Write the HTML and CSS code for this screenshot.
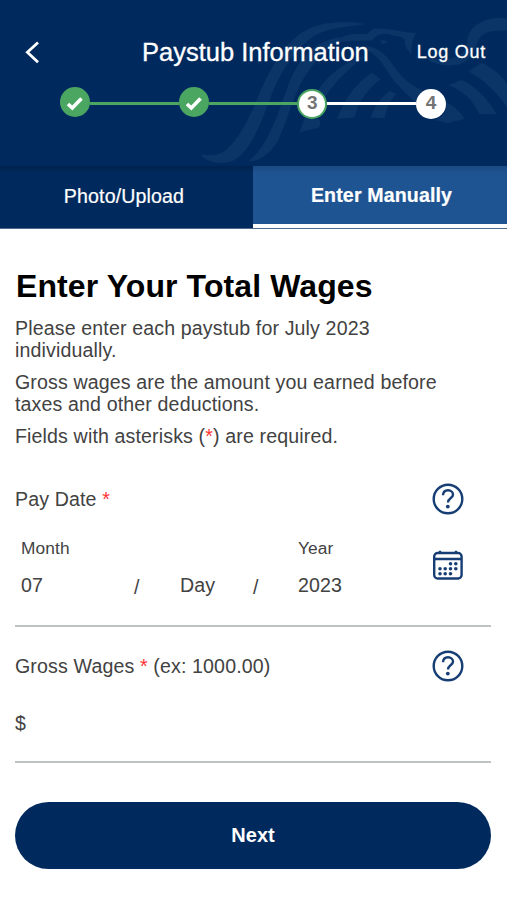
FILE: index.html
```html
<!DOCTYPE html>
<html lang="en">

<head>
  <meta charset="UTF-8">
  <meta name="viewport" content="width=device-width, initial-scale=1.0">
  <title>Paystub Information</title>
  <link rel="stylesheet" href="styles.css">
</head>

<body>
  <header class="header">
    <!-- eagle watermark -->
    <svg class="eagle" viewBox="0 0 951 498" aria-hidden="true">
      <path d="M524 72C470 60 380 62 325 105C270 150 235 215 200 300C170 375 130 440 95 458C70 470 45 464 32 463C45 485 85 496 125 484C175 462 205 390 235 310C270 210 330 120 400 95C440 80 490 80 524 72Z" />
      <path d="M455 112C400 115 350 150 318 205C285 265 270 340 240 395C220 440 195 468 174 484C205 486 240 462 262 425C290 370 305 300 335 245C370 185 410 145 455 112Z" />
      <path d="M678 98C640 100 600 82 550 86C540 92 538 100 525 103C490 98 455 105 430 132C470 118 510 124 545 122C555 108 570 100 595 102C620 112 640 105 645 122C640 140 655 150 665 165C663 145 666 120 678 98ZM570 118L596 126L576 133Z" fill-rule="evenodd" />
      <path d="M490 146C540 140 565 170 590 210C615 255 650 280 680 312L700 272C655 255 630 225 605 190C580 152 540 125 490 146Z" />
      <path d="M528 168C450 185 390 245 350 330C345 355 335 378 328 398C350 390 372 388 388 382C395 360 385 350 375 360C390 300 440 230 528 168Z" />
      <path d="M545 218C500 250 465 290 442 357C460 352 480 356 494 350C505 305 535 265 572 238Z" />
      <path d="M600 272C575 290 555 315 542 353L585 354C588 325 600 300 620 282Z" />
      <path d="M951 55C905 48 860 65 840 95C825 120 840 150 800 170C770 182 735 180 705 172C730 198 790 205 825 185C865 160 850 115 890 98C910 90 930 94 951 90Z" />
      <path d="M875 188L835 214C875 235 920 275 951 322V250C930 222 905 202 875 188Z" />
      <path d="M815 240L775 256C825 275 850 305 868 342L920 343C895 300 860 260 815 240Z" />
      <path d="M740 300L765 318C770 335 760 350 735 360L775 370C790 362 808 362 824 356C812 335 790 315 740 290Z" />
    </svg>

    <div class="top-bar">
      <button class="back" aria-label="Back">
        <svg width="14" height="23" viewBox="0 0 14 23">
          <path d="M13 1.5L2.4 11.3L13 21.2" fill="none" stroke="#fff" stroke-width="2.8" />
        </svg>
      </button>
      <h1>Paystub Information</h1>
      <a class="logout" href="#">Log Out</a>
    </div>

    <div class="steps">
      <div class="step done">
        <svg width="18" height="15" viewBox="0 0 18 15"><path d="M2 8L6.3 12L15.5 2.4" /></svg>
      </div>
      <div class="line"></div>
      <div class="step done">
        <svg width="18" height="15" viewBox="0 0 18 15"><path d="M2 8L6.3 12L15.5 2.4" /></svg>
      </div>
      <div class="line"></div>
      <div class="step current">3</div>
      <div class="line next-line"></div>
      <div class="step">4</div>
    </div>
  </header>

  <nav class="tabs">
    <a class="tab" href="#">Photo/Upload</a>
    <a class="tab active" href="#">Enter Manually</a>
  </nav>

  <main>
    <h2>Enter Your Total Wages</h2>
    <p>Please enter each paystub for July 2023 individually.</p>
    <p>Gross wages are the amount you earned before taxes and other deductions.</p>
    <p>Fields with asterisks (<span class="req">*</span>) are required.</p>

    <form id="wagesForm">
      <div class="field date-field">
        <div class="field-head">
          <label>Pay Date <span class="req">*</span></label>
          <svg class="help" width="32" height="32" viewBox="0 0 32 32">
            <circle cx="16" cy="16" r="14.3" />
            <path d="M11 12.2C11.2 9 13.2 7.3 16 7.3C18.9 7.3 21 9.2 21 11.7C21 15 16 15.2 16 19.6" />
            <circle class="dot" cx="15.8" cy="23.6" r="1.9" />
          </svg>
        </div>
        <div class="date-row">
          <div class="part month"><span class="caption">Month</span><span>07</span></div>
          <span class="slash">/</span>
          <div class="part day"><span>Day</span></div>
          <span class="slash">/</span>
          <div class="part year"><span class="caption">Year</span><span>2023</span></div>
          <svg class="calendar" width="30" height="30" viewBox="0 0 30 30">
            <rect x="1.2" y="3" width="27.4" height="25.5" rx="3.5" />
            <path d="M1.2 9H28.6M7 .8V4M23 .8V4" />
            <path class="dots" d="M17.5 13.8h0M22.8 13.8h0M7 18.8h0M12.2 18.8h0M17.5 18.8h0M22.8 18.8h0M7 23.7h0M12.2 23.7h0M17.5 23.7h0" />
          </svg>
        </div>
      </div>

      <div class="field wage-field">
        <div class="field-head">
          <label>Gross Wages <span class="req">*</span> (ex: 1000.00)</label>
          <svg class="help" width="32" height="32" viewBox="0 0 32 32">
            <circle cx="16" cy="16" r="14.3" />
            <path d="M11 12.2C11.2 9 13.2 7.3 16 7.3C18.9 7.3 21 9.2 21 11.7C21 15 16 15.2 16 19.6" />
            <circle class="dot" cx="15.8" cy="23.6" r="1.9" />
          </svg>
        </div>
        <div class="amount">$</div>
      </div>

      <button class="btn" type="submit">Next</button>
    </form>
  </main>
</body>

</html>
```
FILE: styles.css
```css
* {
	margin: 0;
	padding: 0;
	box-sizing: border-box;
}

body {
	font-family: "Liberation Sans", Arial, sans-serif;
	font-size: 19.6px;
	line-height: 22px;
	letter-spacing: 0.13px;
	color: #424242;
	background: #fff;
}

a {
	text-decoration: none;
}

button {
	border: 0;
	background: transparent;
	font-family: inherit;
}

.header {
	position: relative;
	height: 166px;
	padding-top: 36px;
	background: #002a5e;
	color: #fff;
	overflow: hidden;
}

.eagle {
	position: absolute;
	top: 0;
	right: 0;
	width: 317px;
	height: 166px;
	fill: #0b3467;
}

.top-bar {
	position: relative;
	display: grid;
	grid-template-columns: 117px 1fr 117px;
	align-items: center;
	height: 32px;
	padding: 0 21px 0 25px;
}

.top-bar h1 {
	font-size: 25.5px;
	font-weight: normal;
	white-space: nowrap;
	letter-spacing: 0;
	line-height: 32px;
	-webkit-text-stroke: 0.3px #fff;
}

.back {
	height: 23px;
	text-align: left;
}

.back svg {
	display: block;
}

.logout {
	color: #fff;
	font-size: 18px;
	text-align: right;
	white-space: nowrap;
	letter-spacing: 0.75px;
	-webkit-text-stroke: 0.3px #fff;
}

.steps {
	position: relative;
	display: flex;
	align-items: center;
	margin: 20px 61px 0 60px;
	height: 31px;
}

.step {
	width: 30px;
	height: 30px;
	border-radius: 50%;
	background: #fff;
	color: #747474;
	font-size: 19px;
	font-weight: bold;
	line-height: 27px;
	text-align: center;
	margin-top: 1px;
}

.step.done {
	display: flex;
	align-items: center;
	justify-content: center;
	background: #4ba662;
	margin-top: -3px;
}

.step.done svg {
	margin-top: 2px;
	fill: none;
	stroke: #fff;
	stroke-width: 3.6;
}

.step.current {
	border: 2px solid #4ba662;
	line-height: 23px;
}

.line {
	flex: 1;
	height: 3px;
	background: #4ba662;
}

.next-line {
	background: #fff;
}

.tabs {
	display: flex;
	height: 63px;
	border-bottom: 1px solid #4d6a8c;
	background: #002a5e;
}

.tab {
	width: 253px;
	color: #fff;
	line-height: 60px;
	text-align: center;
	padding-right: 5px;
	background: linear-gradient(#00234f, #002a5e 8px);
	-webkit-text-stroke: 0.2px #fff;
}

.tab.active {
	width: 254px;
	font-weight: bold;
	line-height: 58px;
	padding-left: 3px;
	padding-right: 0;
	border-bottom: 4px solid #fff;
	background: linear-gradient(#1a4a83, #1f5493 8px);
}

main {
	padding: 38px 16px 0 15px;
}

h2 {
	color: #000;
	font-size: 32px;
	line-height: 38px;
	letter-spacing: 0.1px;
	margin-left: 1px;
	margin-bottom: 12px;
}

p {
	max-width: 440px;
	margin-bottom: 10px;
}

.req {
	color: #f33;
}

.field {
	border-bottom: 2px solid #bfc2c2;
}

.field-head {
	display: flex;
	justify-content: space-between;
	align-items: center;
	height: 32px;
	padding-right: 27px;
}

.help,
.calendar {
	fill: none;
	stroke: #173e74;
	stroke-width: 2.4;
}

.help .dot {
	fill: #173e74;
	stroke: none;
}

.calendar {
	align-self: flex-start;
	margin-top: 14px;
}

.calendar .dots {
	stroke-width: 3.6;
	stroke-linecap: round;
}

.date-field {
	height: 144px;
	margin-top: 36px;
}

.date-row {
	display: flex;
	align-items: flex-end;
	height: 60px;
	margin-top: 21px;
	padding: 0 28px 0 6px;
}

.part {
	display: flex;
	flex-direction: column;
	justify-content: space-between;
	height: 59px;
}

.month {
	width: 113px;
}

.day {
	width: 73px;
	margin-left: 39px;
	justify-content: flex-end;
}

.year {
	flex: 1;
	margin-left: 38px;
}

.caption {
	font-size: 17.3px;
}

.slash {
	width: 7px;
	margin-bottom: -2px;
}

.wage-field {
	height: 113px;
	margin-top: 23px;
}

.amount {
	margin-top: 30px;
}

.btn {
	display: block;
	width: 100%;
	height: 67px;
	margin-top: 39px;
	border-radius: 34px;
	background: #002a5e;
	color: #fff;
	font-size: 20px;
	font-weight: bold;
}
```
